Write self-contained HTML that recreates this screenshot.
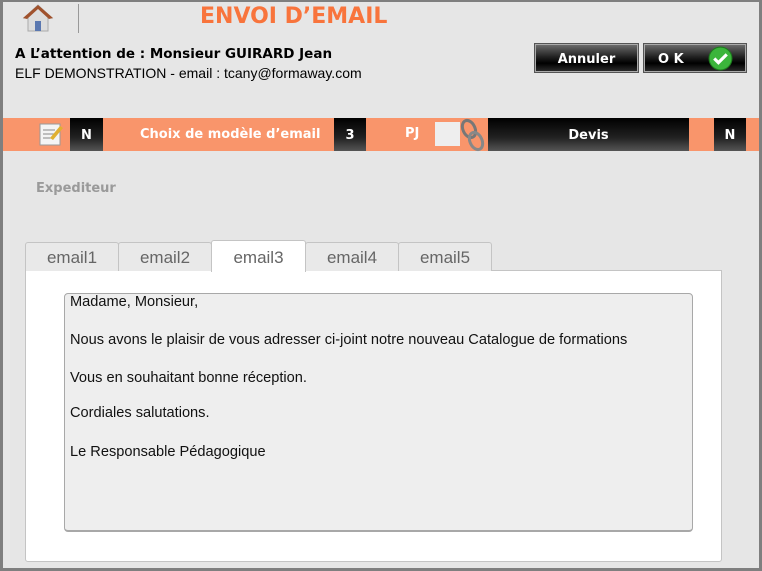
<!DOCTYPE html>
<html><head><meta charset="utf-8"><style>
*{margin:0;padding:0;box-sizing:border-box}
body{width:762px;height:571px;background:#e6e6e6;position:relative;overflow:hidden;font-family:"Liberation Sans",Arial,sans-serif}
.frame{position:absolute;left:0;top:0;width:762px;height:571px;border:3px solid #7f7f7f;border-top-width:2px;pointer-events:none}
.abs{position:absolute}
.v{font-family:"DejaVu Sans","Liberation Sans",sans-serif;font-weight:bold}
.btn{position:absolute;top:44px;height:28px;background:linear-gradient(#6a6a6a,#222 45%,#000 70%,#2a2a2a);border:1px solid #aaa;outline:1px solid #555;color:#fff;font-size:13px;line-height:29px}
.band{position:absolute;left:3px;right:3px;top:118px;height:33px;background:#f9956b}
.blk{position:absolute;top:118px;height:33px;background:linear-gradient(#000,#222 60%,#555);color:#fff;font-size:13px;line-height:35px;text-align:center}
.tab{position:absolute;top:242px;height:29px;border:1px solid #c4c4c4;border-bottom:none;border-radius:3px 3px 0 0;background:#e9e9e9;color:#666;font-size:17px;text-align:center;line-height:30px}
.ta div{position:absolute;left:5px;font-size:14.6px;color:#111}
</style></head><body>
<svg class="abs" style="left:22px;top:3px" width="32" height="30" viewBox="0 0 32 30">
<polygon points="16,2 2,15 6,15 6,28 26,28 26,15 30,15" fill="#ddd" stroke="#aaa"/>
<polygon points="16,2 1,15 5,16 16,6 27,16 31,15" fill="#a0522d"/>
<rect x="13" y="18" width="6" height="10" fill="#5b78b0"/>
</svg>
<div class="abs" style="left:78px;top:4px;width:1px;height:29px;background:#999"></div>
<div class="abs v" style="left:200px;top:4px;font-size:22px;color:#f8743c">ENVOI D’EMAIL</div>
<div class="abs v" style="left:15px;top:46px;font-size:13.5px;color:#000">A L’attention de : Monsieur GUIRARD Jean</div>
<div class="abs" style="left:15px;top:65px;font-size:14px;color:#000">ELF DEMONSTRATION - email : tcany@formaway.com</div>
<div class="btn v" style="left:535px;width:103px;text-align:center">Annuler</div>
<div class="btn v" style="left:644px;width:102px;padding-left:13px">O K
<svg style="position:absolute;right:12px;top:1px" width="25" height="25" viewBox="0 0 24 24"><circle cx="12" cy="12" r="11" fill="#3bb53b" stroke="#1d7a1d"/><path d="M6 12l4 4 8-8" stroke="#fff" stroke-width="3" fill="none"/></svg></div>
<div class="band"></div>
<svg class="abs" style="left:38px;top:121px" width="26" height="26" viewBox="0 0 26 26"><rect x="2" y="3" width="20" height="21" fill="#f4f4f4" stroke="#999"/><path d="M5 9h12M5 13h12M5 17h10" stroke="#888"/><path d="M12 17l10-12 3 2-10 12z" fill="#e0b030"/></svg>
<div class="blk v" style="left:70px;width:33px">N</div>
<div class="abs v" style="left:140px;top:118px;line-height:33px;color:#fff;font-size:13px">Choix de modèle d’email</div>
<div class="blk v" style="left:334px;width:32px">3</div>
<div class="abs v" style="left:405px;top:118px;line-height:31px;color:#fff;font-size:13px">PJ</div>
<div class="abs" style="left:435px;top:122px;width:25px;height:24px;background:#eee"></div>
<svg class="abs" style="left:459px;top:118px" width="28" height="34" viewBox="0 0 28 34"><ellipse cx="10" cy="11" rx="6" ry="9" fill="none" stroke="#777" stroke-width="3" transform="rotate(-25 10 11)"/><ellipse cx="17" cy="23" rx="6" ry="9" fill="none" stroke="#888" stroke-width="3" transform="rotate(-25 17 23)"/></svg>
<div class="blk v" style="left:488px;width:201px">Devis</div>
<div class="blk v" style="left:714px;width:32px">N</div>
<div class="abs v" style="left:36px;top:181px;font-size:13px;color:#9a9a9a">Expediteur</div>
<div class="abs" style="left:25px;top:270px;width:697px;height:292px;background:#fff;border:1px solid #c4c4c4;border-radius:0 0 3px 3px"></div>
<div class="tab" style="left:25px;width:94px">email1</div>
<div class="tab" style="left:118px;width:94px">email2</div>
<div class="tab" style="left:398px;width:94px">email5</div>
<div class="tab" style="left:305px;width:94px">email4</div>
<div class="tab" style="left:211px;top:240px;height:32px;width:95px;background:#fff;line-height:34px">email3</div>
<div class="abs ta" style="left:64px;top:293px;width:629px;height:239px;background:#eee;border:1px solid #a8a8a8;border-bottom-width:2px;border-radius:4px">
<div style="top:0px">Madame, Monsieur,</div>
<div style="top:38px">Nous avons le plaisir de vous adresser ci-joint notre nouveau Catalogue de formations</div>
<div style="top:76px">Vous en souhaitant bonne réception.</div>
<div style="top:111px">Cordiales salutations.</div>
<div style="top:150px">Le Responsable Pédagogique</div>
</div>
<div class="frame"></div>
</body></html>
